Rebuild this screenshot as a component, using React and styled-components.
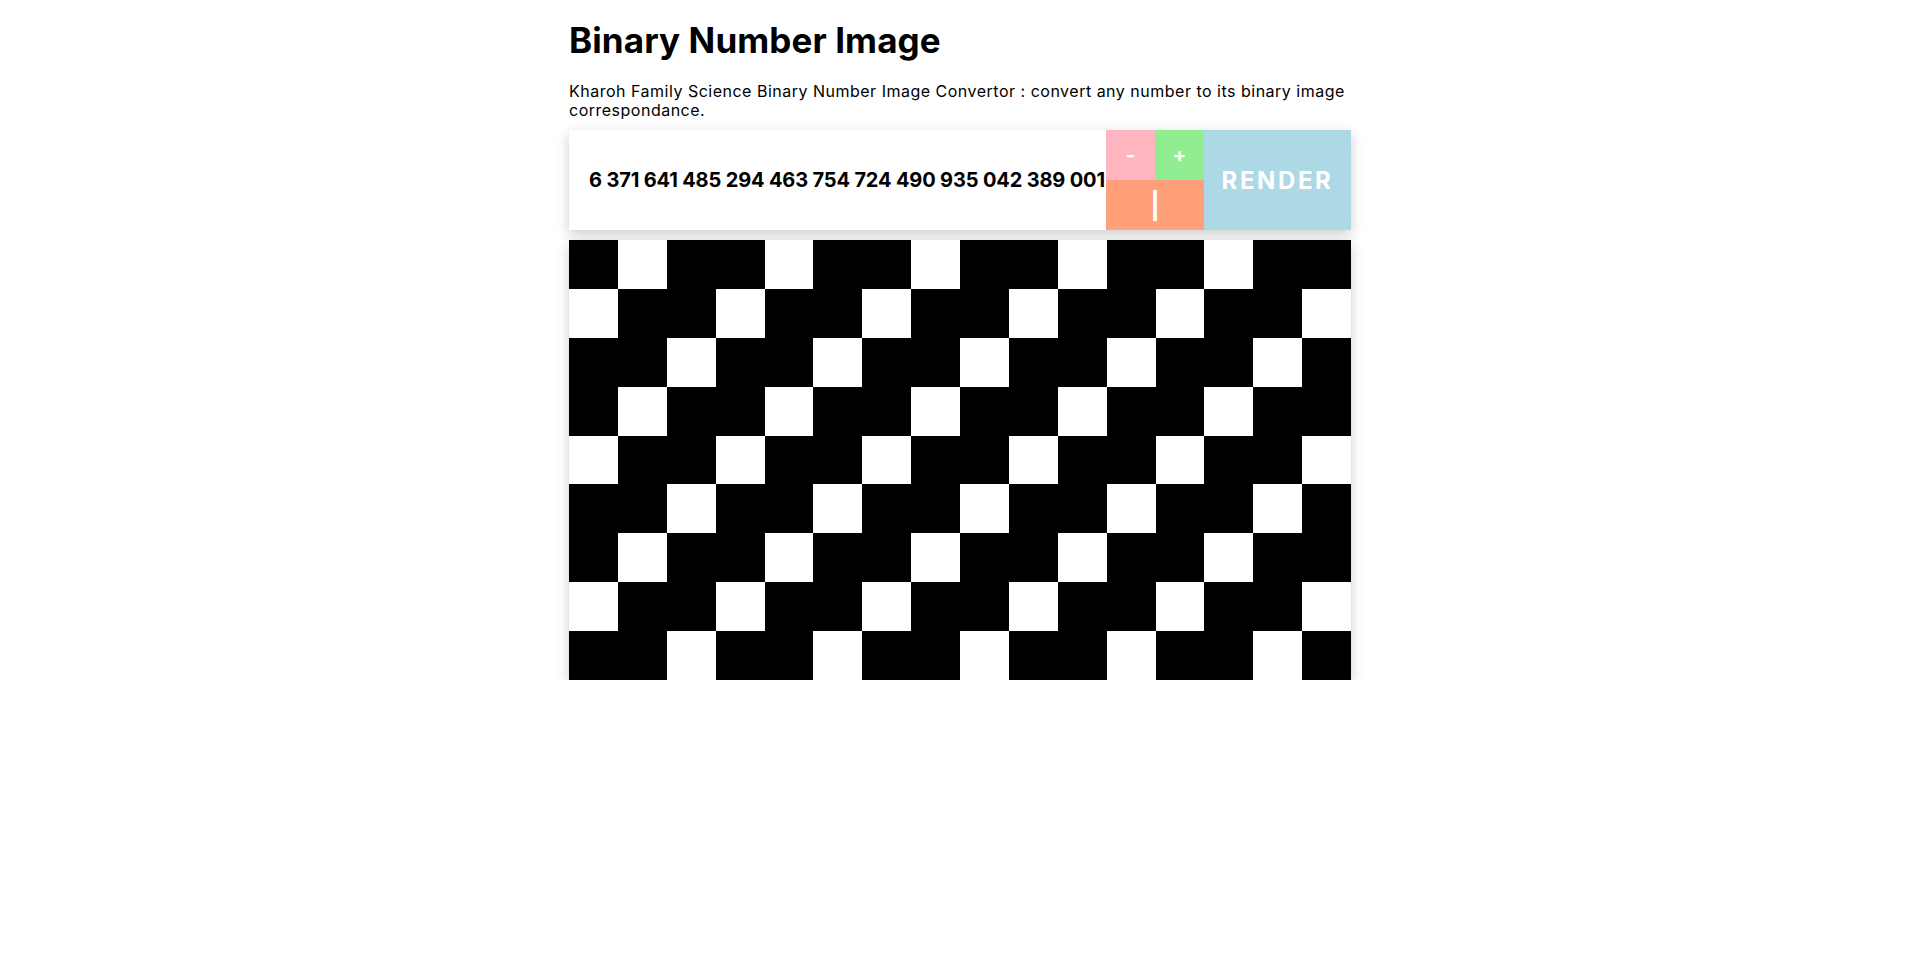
import React, { useState } from "react";
import styled, { createGlobalStyle } from "styled-components";

const GlobalStyle = createGlobalStyle`
  body {
    margin: 0;
    background: #fff;
    font-family: "Inter", "Noto Sans", sans-serif;
    color: #000;
  }
`;

const StyledPage = styled.div`
  width: 782px;
  margin: 0 auto;
  padding-top: 19px;
`;

const StyledTitle = styled.h1`
  margin: 0;
  font-size: 35px;
  font-weight: 700;
  line-height: 42px;
  letter-spacing: 0.1px;
`;

const StyledDescription = styled.p`
  margin: 21px 0 10px 0;
  font-size: 16px;
  line-height: 19px;
  letter-spacing: 0.5px;
`;

const StyledToolbar = styled.div`
  display: flex;
  height: 100px;
  box-shadow: 0 4px 12px rgba(0, 0, 0, 0.2);
`;

const StyledNumberInput = styled.input`
  flex: 1;
  min-width: 0;
  border: none;
  outline: none;
  padding: 0 0 0 20px;
  font-family: inherit;
  font-size: 20px;
  font-weight: 700;
  letter-spacing: -0.15px;
  color: #000;
  background: #fff;
`;

const StyledCluster = styled.div`
  width: 98px;
  display: grid;
  grid-template-columns: 1fr 1fr;
  grid-template-rows: 1fr 1fr;
`;

const StyledSmallButton = styled.button`
  border: none;
  padding: 0;
  cursor: pointer;
  color: #fff;
  font-family: inherit;
  font-weight: 700;
  font-size: ${(p) => p.size || 20}px;
  background-color: ${(p) => p.color};
  grid-column: ${(p) => (p.wide ? "1 / 3" : "auto")};
  display: flex;
  align-items: center;
  justify-content: center;
`;

const StyledRenderButton = styled.button`
  width: 147px;
  border: none;
  padding: 0;
  cursor: pointer;
  background-color: lightblue;
  color: #fff;
  font-family: inherit;
  font-weight: 700;
  font-size: 24px;
  letter-spacing: 2.6px;
`;

const StyledGrid = styled.div`
  margin-top: 10px;
  display: grid;
  grid-template-columns: repeat(16, 1fr);
  box-shadow: 0 4px 12px rgba(0, 0, 0, 0.2);
`;

const StyledCell = styled.div`
  aspect-ratio: 1;
  background-color: ${(p) => (p.on ? "#000" : "#fff")};
`;

const COLUMNS = 16;
const ROWS = 9;

function App() {
  const [number, setNumber] = useState(
    "6 371 641 485 294 463 754 724 490 935 042 389 001"
  );

  // every third cell is blank, the rest are set bits
  const cells = Array.from({ length: COLUMNS * ROWS }, (_, i) => i % 3 !== 1);

  return (
    <>
      <GlobalStyle />
      <StyledPage>
        <StyledTitle>Binary Number Image</StyledTitle>
        <StyledDescription>
          Kharoh Family Science Binary Number Image Convertor : convert any
          number to its binary image correspondance.
        </StyledDescription>
        <StyledToolbar>
          <StyledNumberInput
            type="text"
            value={number}
            onChange={(e) => setNumber(e.target.value)}
          />
          <StyledCluster>
            <StyledSmallButton color="lightpink">-</StyledSmallButton>
            <StyledSmallButton color="lightgreen">+</StyledSmallButton>
            <StyledSmallButton color="lightsalmon" size={26} wide>
              |
            </StyledSmallButton>
          </StyledCluster>
          <StyledRenderButton>RENDER</StyledRenderButton>
        </StyledToolbar>
        <StyledGrid>
          {cells.map((on, i) => (
            <StyledCell key={i} on={on} />
          ))}
        </StyledGrid>
      </StyledPage>
    </>
  );
}

export default App;
